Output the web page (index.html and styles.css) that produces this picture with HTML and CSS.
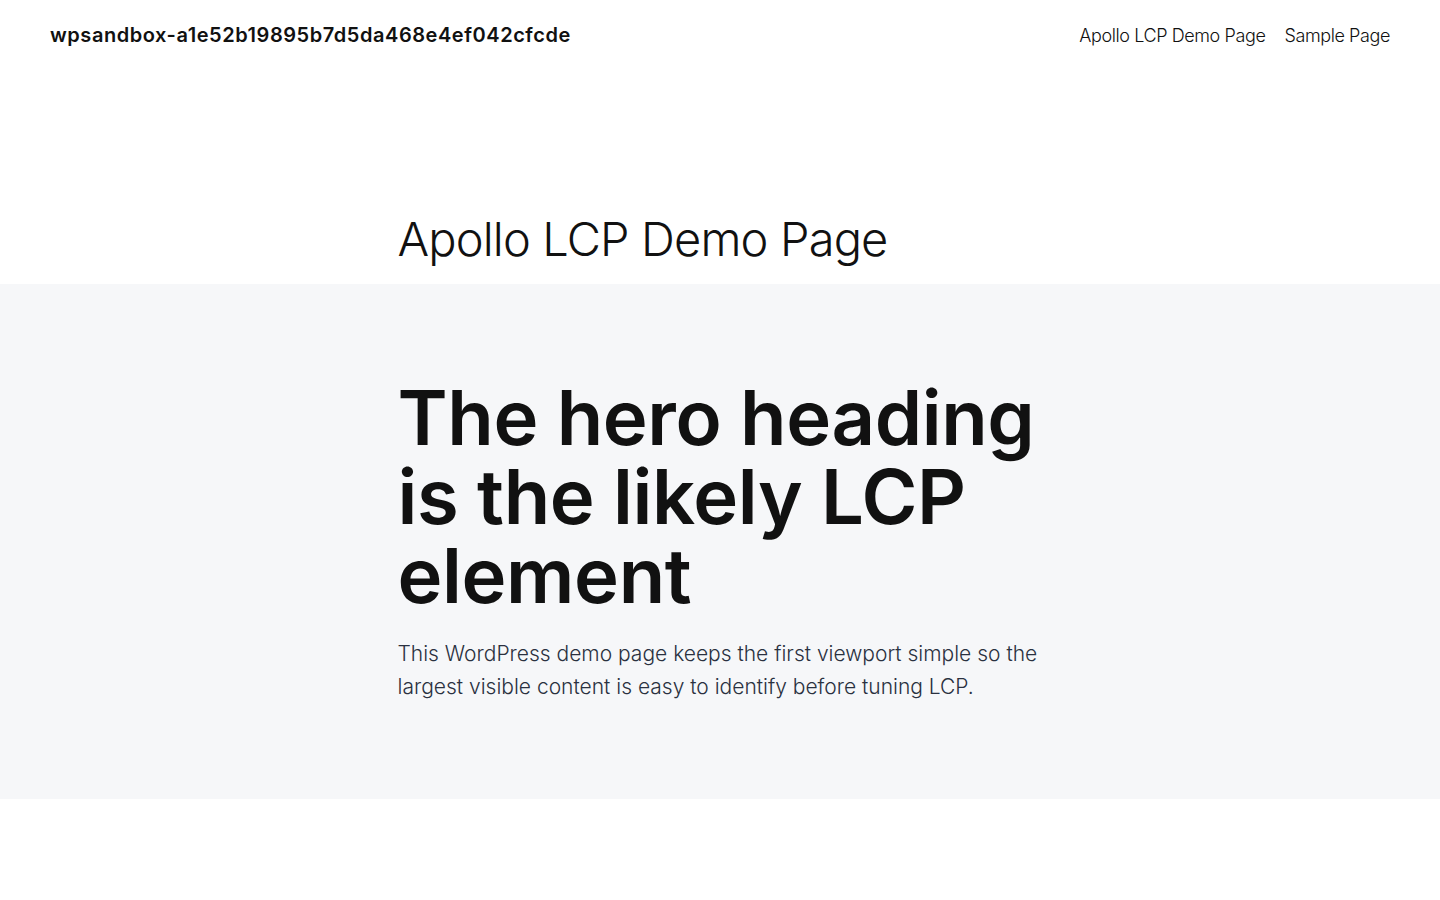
FILE: index.html
```html
<!DOCTYPE html>
<html lang="en">
<head>
<meta charset="utf-8">
<title>Apollo LCP Demo Page</title>
<link rel="stylesheet" href="styles.css">
</head>
<body>
<header class="site-header">
  <p class="site-title">wpsandbox-a1e52b19895b7d5da468e4ef042cfcde</p>
  <nav class="site-nav">
    <a href="#">Apollo LCP Demo Page</a>
    <a href="#">Sample Page</a>
  </nav>
</header>
<main>
  <div class="title-wrap">
    <h1 class="page-title">Apollo LCP Demo Page</h1>
  </div>
  <section class="hero">
    <div class="hero-inner">
      <h2 class="hero-heading">The hero heading is the likely LCP element</h2>
      <p class="hero-text">This WordPress demo page keeps the first viewport simple so the largest visible content is easy to identify before tuning LCP.</p>
    </div>
  </section>
</main>
</body>
</html>
```
FILE: styles.css
```css
html, body {
  margin: 0;
  padding: 0;
  background: #ffffff;
}
body {
  font-family: Inter, "Noto Sans", sans-serif;
  color: #111111;
}
.site-header {
  display: flex;
  justify-content: space-between;
  align-items: center;
  height: 70px;
  padding: 0 50px;
}
.site-title {
  margin: 0;
  font-size: 20px;
  font-weight: 600;
  letter-spacing: 0.55px;
  color: #111111;
}
.site-nav {
  display: flex;
  gap: 19px;
}
.site-nav a {
  font-size: 18px;
  font-weight: 300;
  color: #111111;
  text-decoration: none;
  letter-spacing: -0.4px;
}
.title-wrap {
  width: 645px;
  margin: 0 auto;
  padding-top: 132px;
  padding-bottom: 8px;
}
.page-title {
  margin: 0;
  font-size: 47px;
  font-weight: 300;
  line-height: 74px;
  letter-spacing: -0.85px;
}
.hero {
  background: #f6f7f9;
  padding: 94px 0 96px;
}
.hero-inner {
  width: 645px;
  margin: 0 auto;
}
.hero-heading {
  margin: 0;
  font-size: 76px;
  font-weight: 600;
  line-height: 79px;
  letter-spacing: -0.4px;
  color: #111111;
}
.hero-text {
  margin: 22px 0 0;
  font-size: 21px;
  font-weight: 300;
  line-height: 33px;
  letter-spacing: 0px;
  color: #2a3140;
}
```
